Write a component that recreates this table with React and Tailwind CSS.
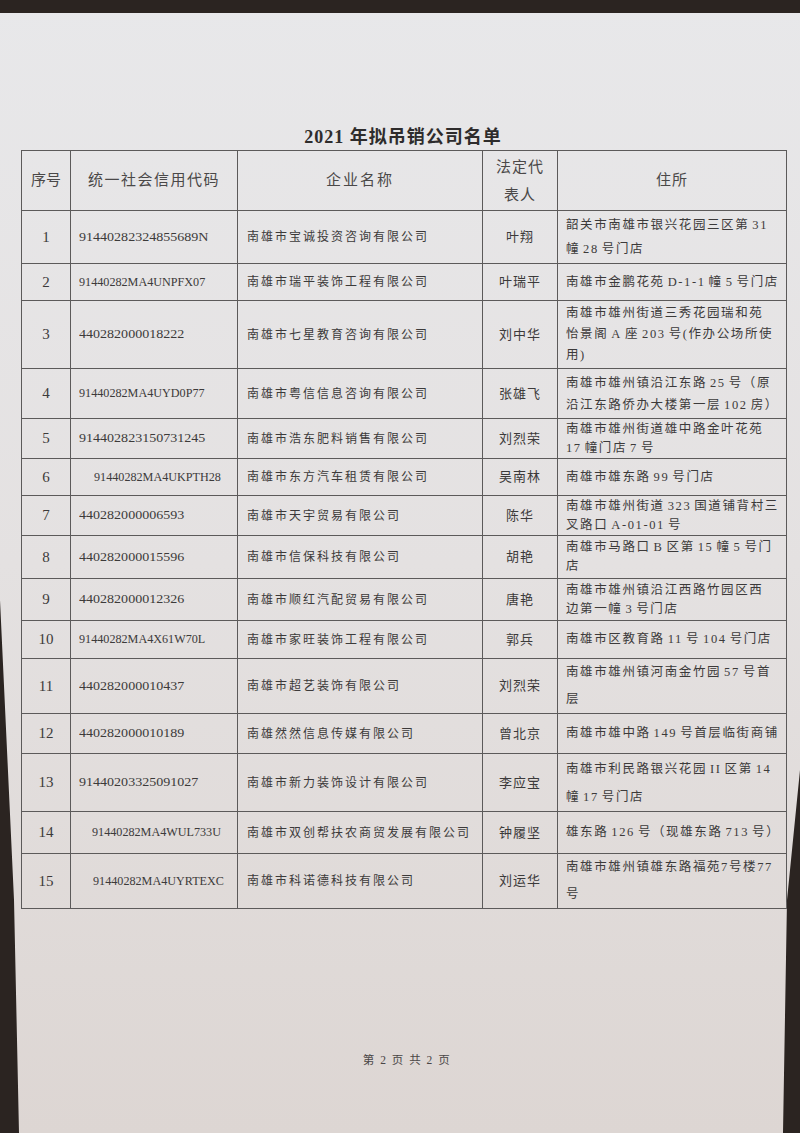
import React from "react";

const rows = [
  { n: "1", code: "91440282324855689N", name: "南雄市宝诚投资咨询有限公司", rep: "叶翔", addr: ["韶关市南雄市银兴花园三区第 31", "幢 28 号门店"], h: "h-[53px]", lh: "leading-[24px]" },
  { n: "2", code: "91440282MA4UNPFX07", name: "南雄市瑞平装饰工程有限公司", rep: "叶瑞平", addr: ["南雄市金鹏花苑 D-1-1 幢 5 号门店"], h: "h-[37px]" },
  { n: "3", code: "440282000018222", name: "南雄市七星教育咨询有限公司", rep: "刘中华", addr: ["南雄市雄州街道三秀花园瑞和苑", "怡景阁 A 座 203 号(作办公场所使", "用)"], h: "h-[68px]", lh: "leading-[21px]" },
  { n: "4", code: "91440282MA4UYD0P77", name: "南雄市粤信信息咨询有限公司", rep: "张雄飞", addr: ["南雄市雄州镇沿江东路 25 号（原", "沿江东路侨办大楼第一层 102 房）"], h: "h-[50px]", lh: "leading-[22px]" },
  { n: "5", code: "914402823150731245", name: "南雄市浩东肥料销售有限公司", rep: "刘烈荣", addr: ["南雄市雄州街道雄中路金叶花苑", "17 幢门店 7 号"], h: "h-[40px]" },
  { n: "6", code: "91440282MA4UKPTH28", name: "南雄市东方汽车租赁有限公司", rep: "吴南林", addr: ["南雄市雄东路 99 号门店"], h: "h-[37px]", indent: "pl-[23px]" },
  { n: "7", code: "440282000006593", name: "南雄市天宇贸易有限公司", rep: "陈华", addr: ["南雄市雄州街道 323 国道铺背村三", "叉路口 A-01-01 号"], h: "h-[40px]" },
  { n: "8", code: "440282000015596", name: "南雄市信保科技有限公司", rep: "胡艳", addr: ["南雄市马路口 B 区第 15 幢 5 号门", "店"], h: "h-[43px]" },
  { n: "9", code: "440282000012326", name: "南雄市顺红汽配贸易有限公司", rep: "唐艳", addr: ["南雄市雄州镇沿江西路竹园区西", "边第一幢 3 号门店"], h: "h-[42px]" },
  { n: "10", code: "91440282MA4X61W70L", name: "南雄市家旺装饰工程有限公司", rep: "郭兵", addr: ["南雄市区教育路 11 号 104 号门店"], h: "h-[38px]" },
  { n: "11", code: "440282000010437", name: "南雄市超艺装饰有限公司", rep: "刘烈荣", addr: ["南雄市雄州镇河南金竹园 57 号首", "层"], h: "h-[54px]", lh: "leading-[27px]" },
  { n: "12", code: "440282000010189", name: "南雄然然信息传媒有限公司", rep: "曾北京", addr: ["南雄市雄中路 149 号首层临街商铺"], h: "h-[40px]" },
  { n: "13", code: "91440203325091027", name: "南雄市新力装饰设计有限公司", rep: "李应宝", addr: ["南雄市利民路银兴花园 II 区第 14", "幢 17 号门店"], h: "h-[58px]", lh: "leading-[28px]" },
  { n: "14", code: "91440282MA4WUL733U", name: "南雄市双创帮扶农商贸发展有限公司", rep: "钟履坚", addr: ["雄东路 126 号（现雄东路 713 号）"], h: "h-[42px]", indent: "pl-[21px]" },
  { n: "15", code: "91440282MA4UYRTEXC", name: "南雄市科诺德科技有限公司", rep: "刘运华", addr: ["南雄市雄州镇雄东路福苑7号楼77", "号"], h: "h-[53px]", lh: "leading-[27px]", indent: "pl-[22px]" },
];

const cell = "border border-[#5c5a5a] align-middle";

// the printout puts a narrow gap between Chinese and Latin runs
function Line({ text }) {
  const parts = text.split(" ");
  return (
    <div>
      {parts.map((p, i) => (
        <React.Fragment key={i}>
          {i > 0 && <span className="inline-block w-[3px]" />}
          {p}
        </React.Fragment>
      ))}
    </div>
  );
}

export default function App() {
  return (
    <div className="w-[800px] h-[1133px] bg-[#2b2421] overflow-hidden font-['Liberation_Serif','Noto_Sans_CJK_SC',serif] text-[#3c3a3a]">
      <div className="w-full h-full bg-linear-to-b from-[#e8e8ea] via-[#e4e1e1] to-[#ddd6d3] [clip-path:polygon(0px_13px,800px_13px,800px_770px,787px_900px,783px_1133px,19px_1133px,14px_900px,0px_600px)] pt-[124px] flex flex-col">
        <h1 className="text-center text-[18px] font-bold tracking-[1px] leading-[26px] text-[#2e2c2c] pl-[6px]">2021 年拟吊销公司名单</h1>
        <table className="ml-[21px] w-[765px] table-fixed border-collapse">
          <colgroup>
            <col className="w-[49px]" />
            <col className="w-[167px]" />
            <col className="w-[245px]" />
            <col className="w-[75px]" />
            <col className="w-[229px]" />
          </colgroup>
          <thead>
            <tr className="h-[60px] text-[15px] text-[#4a4848]">
              <th className={`${cell} font-normal`}>序号</th>
              <th className={`${cell} font-normal tracking-[1.5px]`}>统一社会信用代码</th>
              <th className={`${cell} font-normal tracking-[2px]`}>企业名称</th>
              <th className={`${cell} font-normal leading-[28px] tracking-[1px]`}>法定代<br />表人</th>
              <th className={`${cell} font-normal tracking-[1px]`}>住所</th>
            </tr>
          </thead>
          <tbody>
            {rows.map((r) => (
              <tr key={r.n} className={r.h}>
                <td className={`${cell} text-center text-[15px]`}>{r.n}</td>
                <td className={`${cell} text-[13.5px] ${r.indent || "pl-[8px]"} whitespace-nowrap`}>
                  <span className={/[A-Z]{2}/.test(r.code) ? "inline-block origin-left scale-x-[0.9]" : "inline-block origin-left scale-x-[1.04]"}>
                    {r.code}
                  </span>
                </td>
                <td className={`${cell} pl-[9px] text-[12px] tracking-[2px] whitespace-nowrap`}>{r.name}</td>
                <td className={`${cell} text-center text-[13px] tracking-[1px] whitespace-nowrap`}>{r.rep}</td>
                <td className={`${cell} pl-[8px] text-[12.5px] tracking-[1.6px] ${r.lh || "leading-[19px]"} whitespace-nowrap overflow-hidden`}>
                  {r.addr.map((line, i) => (
                    <Line key={i} text={line} />
                  ))}
                </td>
              </tr>
            ))}
          </tbody>
        </table>
        <div className="mt-auto mb-[64px] text-center text-[11.5px] tracking-[1.5px] text-[#4a4646] pl-[14px]">第 2 页 共 2 页</div>
      </div>
    </div>
  );
}
